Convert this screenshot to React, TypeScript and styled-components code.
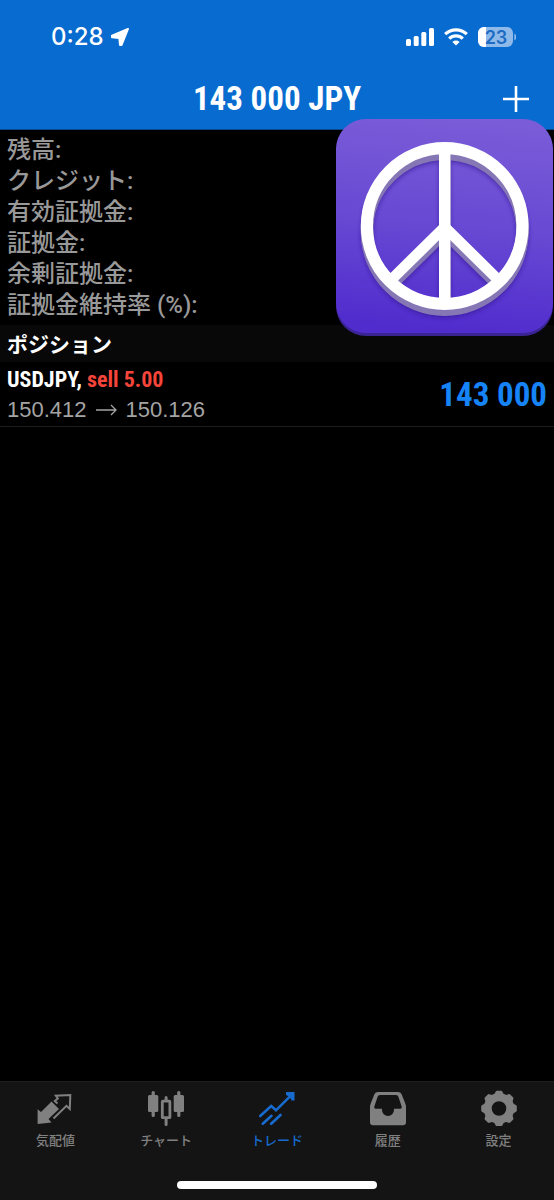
import React from "react";
import styled, { createGlobalStyle } from "styled-components";

const narrow = `"Roboto Condensed", "Arial Narrow", sans-serif`;
const japanese = `"Noto Sans CJK JP", sans-serif`;

const GlobalStyle = createGlobalStyle`
  *, *::before, *::after { box-sizing: border-box; }
  body { margin: 0; background: #000; font-family: ${japanese}; }
  h1, h2, p, ul { margin: 0; padding: 0; }
`;

const Screen = styled.div`
  display: flex;
  flex-direction: column;
  min-height: 100vh;
  background: #000;
  color: #fff;
`;

const Header = styled.header`
  background: #076bcf;
  border-bottom: 1px solid #0a4a8c;
`;

const StatusBar = styled.div`
  display: flex;
  align-items: center;
  justify-content: space-between;
  height: 68px;
  padding: 6px 38px 0 51px;
`;

const StatusGroup = styled.div`
  display: flex;
  align-items: center;
  gap: 6px;
`;

const StatusIcons = styled(StatusGroup)`
  gap: 10px;
`;

const Clock = styled.span`
  font: 500 24px/28px Inter, sans-serif;
`;

const NavBar = styled.div`
  display: grid;
  grid-template-columns: 1fr auto 1fr;
  align-items: center;
  height: 61px;
  padding: 0 25px;
`;

const Title = styled.h1`
  grid-column: 2;
  font: bold 33px/40px ${narrow};
`;

const AddButton = styled.button`
  justify-self: end;
  display: flex;
  padding: 0;
  border: 0;
  background: none;
  color: #fff;
`;

const Main = styled.main`
  position: relative;
  flex: 1;
`;

const Summary = styled.ul`
  list-style: none;
  padding: 5px 7px 4px;
`;

const SummaryRow = styled.li`
  color: #999;
  font: 500 24px/31px Roboto, ${japanese};
`;

const SectionTitle = styled.h2`
  padding: 0 7px;
  background: #080808;
  font: bold 21px/37px ${japanese};
`;

const AppBadge = styled.svg`
  position: absolute;
  top: -11px;
  right: 1px;
`;

const Position = styled.article`
  display: flex;
  align-items: center;
  justify-content: space-between;
  padding: 3px 7px 1px;
  border-bottom: 1px solid #1c1c1c;
`;

const Symbol = styled.p`
  font: bold 22px/30px ${narrow};
`;

const Side = styled.span`
  color: #f5453a;
`;

const Prices = styled.p`
  display: flex;
  align-items: center;
  gap: 9px;
  color: #a4a4a4;
  font: 22px/30px "Liberation Sans", sans-serif;
`;

const Profit = styled.strong`
  color: #1683f7;
  font: bold 33px/40px ${narrow};
`;

const TabBar = styled.nav`
  display: flex;
  flex-direction: column;
  align-items: center;
  background: #141414;
  border-top: 1px solid #1e1e1e;
`;

const Tabs = styled.div`
  display: grid;
  grid-template-columns: repeat(5, 1fr);
  width: 100%;
  padding-top: 8px;
`;

const Tab = styled.a<{ $active?: boolean }>`
  display: flex;
  flex-direction: column;
  align-items: center;
  gap: 5px;
  color: ${(p) => (p.$active ? "#176bce" : "#808080")};
  font: 500 13px/18px ${japanese};
  text-decoration: none;
`;

const HomeIndicator = styled.div`
  width: 36%;
  height: 8px;
  margin: 32px 0 11px;
  border-radius: 4px;
  background: #fff;
`;

const LocationIcon = () => (
  <svg width="20" height="20" viewBox="0 0 20 20" fill="#fff" stroke="#fff" strokeWidth="2" strokeLinejoin="round">
    <path d="M18 2 2 8.700 2 10.300 9.300 11 10 18 11.600 18Z" />
  </svg>
);

const SignalIcon = () => (
  <svg width="28" height="18" viewBox="0 0 28 18" fill="#fff">
    <rect x="0" y="11" width="5" height="7" rx="1.500" />
    <rect x="7.700" y="8" width="5" height="10" rx="1.500" />
    <rect x="15.300" y="4" width="5" height="14" rx="1.500" />
    <rect x="23" y="0" width="5" height="18" rx="1.500" />
  </svg>
);

const WifiIcon = () => (
  <svg width="24" height="18" viewBox="0 0 24 18" fill="none" stroke="#fff" strokeWidth="3.200">
    <path d="M1.200 6.200a15.400 15.400 0 0 1 21.600 0" />
    <path d="M5.200 10.600a9.700 9.700 0 0 1 13.600 0" />
    <path d="M12 17.600 8.400 14a5.100 5.100 0 0 1 7.200 0Z" fill="#fff" stroke="none" />
  </svg>
);

const BatteryIcon = () => (
  <svg width="38" height="20" viewBox="0 0 38 20">
    <clipPath id="level">
      <rect width="8" height="20" />
    </clipPath>
    <rect width="35" height="20" rx="6" fill="#8fb9e8" />
    <rect width="35" height="20" rx="6" fill="#fff" clipPath="url(#level)" />
    <path d="M36.300 6.500q2 1 2 3.500t-2 3.500Z" fill="#8fb9e8" />
    <text x="18" y="16.500" textAnchor="middle" fontFamily="Inter, sans-serif" fontSize="18" fontWeight="600" fill="#1d6cc4">
      23
    </text>
  </svg>
);

const PlusIcon = () => (
  <svg width="26" height="26" viewBox="0 0 26 26" stroke="#fff" strokeWidth="2.600" aria-hidden="true">
    <path d="M13 0v26M0 13h26" />
  </svg>
);

const PeaceShape = () => (
  <>
    <circle cx="108.700" cy="107" r="77.800" />
    <path d="M108.700 30v154" strokeWidth="11.400" />
    <path d="M53.500 162.500 108.700 108 163.900 162.500" strokeWidth="10.800" />
  </>
);

const PeaceBadge = () => (
  <AppBadge width="217" height="218" viewBox="0 0 217 218" role="img" aria-label="Peace">
    <defs>
      <linearGradient id="tile" x1="0.550" y1="0" x2="0.450" y2="1">
        <stop offset="0" stopColor="#7a5cd8" />
        <stop offset="0.500" stopColor="#6749d3" />
        <stop offset="1" stopColor="#502bcd" />
      </linearGradient>
      <filter id="soft" x="-10%" y="-10%" width="120%" height="120%">
        <feGaussianBlur stdDeviation="2" />
      </filter>
    </defs>
    <rect y="2" width="217" height="215" rx="30" fill="#3a2494" />
    <rect width="217" height="214" rx="30" fill="url(#tile)" />
    <g fill="none" strokeWidth="12.200">
      <g stroke="#33188f" opacity="0.600" transform="translate(0 8)" filter="url(#soft)">
        <PeaceShape />
      </g>
      {[6, 5, 4, 3, 2, 1].map((y) => (
        <g key={y} stroke="#8677b5" transform={`translate(0 ${y})`}>
          <PeaceShape />
        </g>
      ))}
      <g stroke="#fff">
        <PeaceShape />
      </g>
    </g>
  </AppBadge>
);

const TabIcon = ({ children }: { children: React.ReactNode }) => (
  <svg width="36" height="36" viewBox="0 0 36 36" fill="currentColor" aria-hidden="true">
    {children}
  </svg>
);

const QuotesIcon = () => (
  <TabIcon>
    <path d="M.600 19.300 4 22 14.500 11.500 22 19 11.500 29 14.500 32.500.600 34Z" />
    <path
      d="M20.500 13.500 17.800 11 20.800 8.500 18.800 5.700 33.300 5 32.800 19 29.500 15.800 16.500 28.500"
      fill="none"
      stroke="currentColor"
      strokeWidth="2"
    />
  </TabIcon>
);

const ChartIcon = () => (
  <TabIcon>
    <rect x="0" y="5" width="10.300" height="17" rx="1.500" />
    <rect x="3.600" y="1" width="3.200" height="26" rx="1.500" />
    <rect x="25.700" y="5" width="10.300" height="17" rx="1.500" />
    <rect x="29.200" y="1" width="3.200" height="26" rx="1.500" />
    <rect x="14.300" y="11.200" width="7.600" height="16.500" rx="0.500" fill="none" stroke="currentColor" strokeWidth="2.800" />
    <path d="M18.100 10V7.500M18.100 29v5.500" stroke="currentColor" strokeWidth="3" strokeLinecap="round" />
  </TabIcon>
);

const TradeIcon = () => (
  <TabIcon>
    <path
      d="M1.200 26 12.200 16 17 20.300 33 4.300M3.800 33.800 12.500 25.800M12.200 33.800 21.500 25"
      fill="none"
      stroke="currentColor"
      strokeWidth="2.600"
      strokeLinecap="round"
    />
    <path d="M27 2H35.500V10.500H32.500L31 7.500 30 6.500 27 5Z" />
  </TabIcon>
);

const HistoryIcon = () => (
  <TabIcon>
    <path
      fillRule="evenodd"
      d="M8 2H28Q30.500 2 31.500 4L35.300 13.500Q36 15 36 17V32.300Q36 35.300 33 35.300H3Q0 35.300 0 32.300V17Q0 15 .700 13.500L4.500 4Q5.500 2 8 2ZM9.800 5Q8.300 5 7.700 6.500L4.300 16.500Q4 18.700 5.500 18.700H12V20a6 6 0 0 0 12 0V18.700H30.500Q32 18.700 31.700 16.500L28.300 6.500Q27.700 5 26.200 5Z"
    />
  </TabIcon>
);

const SettingsIcon = () => (
  <TabIcon>
    <circle cx="18" cy="18.500" r="11.300" fill="none" stroke="currentColor" strokeWidth="8" />
    {[0, 45, 90, 135].map((angle) => (
      <g key={angle} transform={`rotate(${angle} 18 18.500)`}>
        <path d="M12.300 6 14.600 1.700Q15 .700 16 .700H20Q21 .700 21.400 1.700L23.700 6Z" />
        <path d="M12.300 31 14.600 35.300Q15 36.300 16 36.300H20Q21 36.300 21.400 35.300L23.700 31Z" />
      </g>
    ))}
  </TabIcon>
);

const summaryLabels = ["残高:", "クレジット:", "有効証拠金:", "証拠金:", "余剰証拠金:", "証拠金維持率 (%):"];

const tabs = [
  { label: "気配値", Icon: QuotesIcon },
  { label: "チャート", Icon: ChartIcon },
  { label: "トレード", Icon: TradeIcon, active: true },
  { label: "履歴", Icon: HistoryIcon },
  { label: "設定", Icon: SettingsIcon },
];

export default function App() {
  return (
    <Screen lang="ja">
      <GlobalStyle />
      <Header>
        <StatusBar>
          <StatusGroup>
            <Clock>0:28</Clock>
            <LocationIcon />
          </StatusGroup>
          <StatusIcons>
            <SignalIcon />
            <WifiIcon />
            <BatteryIcon />
          </StatusIcons>
        </StatusBar>
        <NavBar>
          <Title>143 000 JPY</Title>
          <AddButton type="button" aria-label="追加">
            <PlusIcon />
          </AddButton>
        </NavBar>
      </Header>
      <Main>
        <Summary>
          {summaryLabels.map((label) => (
            <SummaryRow key={label}>{label}</SummaryRow>
          ))}
        </Summary>
        <SectionTitle>ポジション</SectionTitle>
        <Position>
          <div>
            <Symbol>
              USDJPY, <Side>sell 5.00</Side>
            </Symbol>
            <Prices>
              <span>150.412</span>
              <svg width="21" height="12" viewBox="0 0 21 12" fill="none" stroke="currentColor" strokeWidth="1.300" aria-label="→">
                <path d="M0 6h20M15 1l5 5-5 5" />
              </svg>
              <span>150.126</span>
            </Prices>
          </div>
          <Profit>143 000</Profit>
        </Position>
        <PeaceBadge />
      </Main>
      <TabBar>
        <Tabs>
          {tabs.map(({ label, Icon, active }) => (
            <Tab key={label} href="#" $active={active} aria-current={active ? "page" : undefined}>
              <Icon />
              {label}
            </Tab>
          ))}
        </Tabs>
        <HomeIndicator />
      </TabBar>
    </Screen>
  );
}
